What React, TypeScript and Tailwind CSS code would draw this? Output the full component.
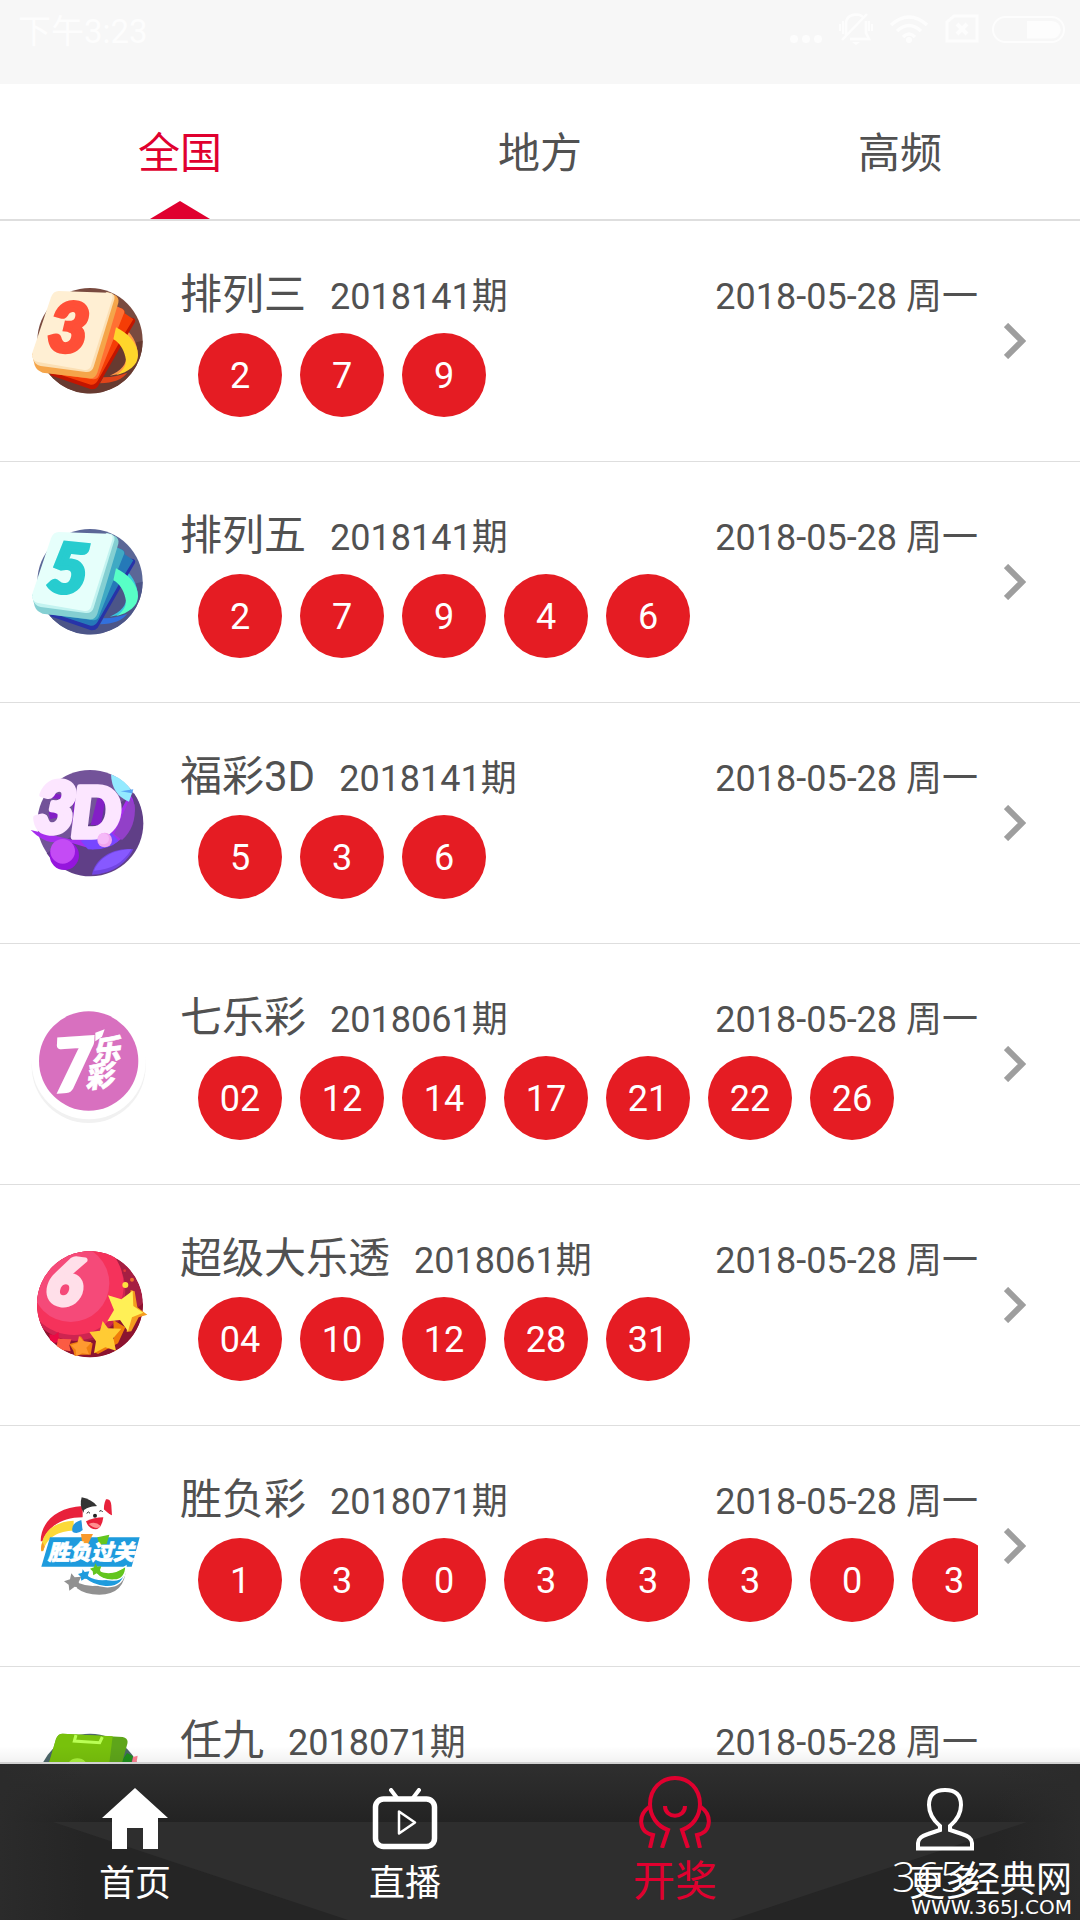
import type {ReactNode} from 'react';

interface Draw {
  name: string;
  period: string;
  date: string;
  balls: string[];
  icon: ReactNode;
}

interface TileColors {
  disc: string;
  discDark: string;
  face: string;
  faceEdge: string;
  side: string;
  cardA: string;
  cardB: string;
  cardC: string;
  ribbon: string;
  ribbonBack: string;
  ribbonLow: string;
  digit: string;
}

const orangeTile: TileColors = {
  disc: '#794a3f',
  discDark: '#673a30',
  face: '#ffefd3',
  faceEdge: '#fbdfb4',
  side: '#f5a54a',
  cardA: '#ff7033',
  cardB: '#f53d06',
  cardC: '#c21500',
  ribbon: '#ffd62b',
  ribbonBack: '#ff9648',
  ribbonLow: '#e0441a',
  digit: '#ff4f37'
};

const tealTile: TileColors = {
  disc: '#5b6797',
  discDark: '#4c5588',
  face: '#e6fffb',
  faceEdge: '#c3f3f0',
  side: '#84cfd2',
  cardA: '#3fa9c4',
  cardB: '#2579b8',
  cardC: '#2733a8',
  ribbon: '#58ffc6',
  ribbonBack: '#38c6dd',
  ribbonLow: '#3270dd',
  digit: '#27cccf'
};

function TileIcon({digit, colors}: Readonly<{digit: string; colors: TileColors}>) {
  return (
    <svg className="size-[120px] overflow-visible" viewBox="60 33 360 360" aria-hidden="true">
      <circle cx="240" cy="212" r="158" fill={colors.disc} />
      <path d="M398 212a158 158 0 0 1-300 70z" fill={colors.discDark} />
      <path d="M270 340q60-2 82-32-30 12-72 14z" fill={colors.ribbonLow} />
      <path d="M335 165c28 22 50 55 48 92-4 32-40 55-84 60 34-14 52-34 50-62-2-26-16-46-36-60z" fill={colors.ribbonBack} />
      {/* Stacked cards behind the front tile */}
      <path d="M340 140l30 4q8 3 5 12l-20 34-92 160q-8 10-22 7l-122-42z" fill={colors.cardC} />
      <path d="M322 112l16 4q8 6 6 14l26 18-32 52-76 134q-8 12-20 10l-116-38z" fill={colors.cardB} />
      <path d="M318 108l18 8q9 5 6 14l-76 188q-6 12-20 9l-132-18z" fill={colors.cardA} />
      <path d="M318 172c36 18 66 48 66 84 0 30-28 50-66 60 24-16 34-34 28-56-6-24-18-42-36-52z" fill={colors.ribbon} />
      <path d="M290 68l26 8q12 8 9 22l-63 210q-7 20-26 17L98 308q-18-6-24-22l-8-34z" fill={colors.side} />
      <path d="M290 66l16 4q10 6 7 18l-62 202q-6 18-24 16L92 288q-20-4-24-26z" fill={colors.faceEdge} />
      <path d="M146 63l148 5q17 2 13 18l-64 202q-5 14-20 12L84 276q-22-6-17-28l56-166q7-19 23-19z" fill={colors.face} />
      <text
        x="176"
        y="245"
        transform="rotate(6 176 175)"
        textAnchor="middle"
        fontSize="204"
        fill={colors.digit}
        stroke={colors.digit}
        strokeWidth="14"
        className="font-[Lato,sans-serif] font-black italic"
      >
        {digit}
      </text>
    </svg>
  );
}

function ThreeDIcon() {
  return (
    <svg className="size-[120px] overflow-visible" viewBox="60 69 360 360" aria-hidden="true">
      <circle cx="240" cy="248" r="158" fill="#735399" />
      <path d="M372 160a158 158 0 0 1-262 180z" fill="#603f87" />
      <path d="M246 404c8-44 56-82 124-76-24 48-72 76-124 76z" fill="#7145e2" />
      <path d="M252 392c14-36 56-64 112-64-22 40-62 62-112 64z" fill="#8759ff" />
      {/* Depth of the letters */}
      <path d="M62 270q30 30 60 36l66 4 60 18q110-4 126-120-4-42-16-44l-60 110-110 26z" fill="#a62ded" />
      <path d="M212 302l22 26q60 4 92-26l-22-24z" fill="#7746ff" />
      <path d="M312 282l24 18q44-40 38-106l-14-20z" fill="#9240c8" />
      <path d="M190 180h40l-24 80-20 6z" fill="#831fc6" />
      <path d="M262 175h44l-20 80h-44z" fill="#831fc6" />
      <path d="M286 180l18 10-14 50-16 6z" fill="#5f3d8e" />
      <path d="M124 160l40 6-10 12-34-4zM116 216l34-2-4 18-26 6z" fill="#831fc6" />
      <g fill="#fce6ff" stroke="#fce6ff" strokeWidth="17" strokeLinejoin="round" className="font-[Lato,sans-serif] font-black italic">
        <text x="74" y="278" fontSize="212" transform="rotate(5 140 200)">3</text>
        <text x="184" y="291" fontSize="208">D</text>
      </g>
      <path d="M303 103q45 18 64 54l-10 28q-52-20-54-82z" fill="#93eaff" />
      <path d="M332 154l38-6-4 12z" fill="#58a5f4" />
      <circle cx="284" cy="300" r="22" fill="#f0a4ee" />
      <circle cx="280" cy="296" r="17" fill="#f5b9f8" />
      <circle cx="163" cy="346" r="44" fill="#9515dd" />
      <circle cx="158" cy="334" r="37" fill="#c44bf5" />
    </svg>
  );
}

function SevenIcon() {
  return (
    <svg className="size-[120px] overflow-visible" viewBox="60 42 360 360" aria-hidden="true">
      <circle cx="236" cy="228" r="171" fill="#f1f1f1" />
      <circle cx="236" cy="217" r="171" fill="#ffffff" />
      <circle cx="236" cy="213" r="149" fill="#d870bf" />
      <path d="M256 128l28-10-8 22-20 14z" fill="#ffffff" />
      <g fill="#ffffff" stroke="#ffffff">
        <text x="128" y="302" fontSize="218" strokeWidth="10" transform="rotate(-4 200 220)" className="font-[Lato,sans-serif] font-black italic">7</text>
        <g fontSize="86" strokeWidth="2" className="font-['Noto_Sans_CJK_SC',sans-serif] font-black italic">
          <text x="244" y="212" transform="rotate(-6 290 180)">乐</text>
          <text x="224" y="290" transform="rotate(-6 270 260)">彩</text>
        </g>
      </g>
    </svg>
  );
}

function LottoIcon() {
  return (
    <svg className="size-[120px] overflow-visible" viewBox="60 45 360 360" aria-hidden="true">
      <clipPath id="lotto-disc">
        <circle cx="240" cy="223" r="159" />
      </clipPath>
      <g clipPath="url(#lotto-disc)">
        <circle cx="240" cy="223" r="159" fill="#a61e42" />
        <path d="M80 260q60 90 170 70l150-110v180H80z" fill="#8c132f" />
        <circle cx="196" cy="182" r="150" fill="#ce2450" />
        <circle cx="192" cy="166" r="149" fill="#f5325b" />
        <circle cx="182" cy="160" r="116" fill="#f54a79" />
      </g>
      <text
        x="164"
        y="224"
        textAnchor="middle"
        fontSize="194"
        fill="#ffdfe9"
        stroke="#ffdfe9"
        strokeWidth="16"
        strokeLinejoin="round"
        transform="rotate(8 168 160)"
        className="font-[Lato,sans-serif] font-black italic"
      >
        6
      </text>
      <path d="M118 312l14 4 14-10v16l12 10-20 6-6 0-12-8z" fill="#ea0a44" />
      <path d="M144 326l40 2-6 18 4 18-24-4-18-12z" fill="#fb5b43" />
      <path d="M212 318l12 18 24 4-6 34-30 0-18 4-4-16-12-20 24-6z" fill="#f08010" />
      <path d="M207 317l12 16 26 4-16 16 8 20-20-3-18 8-2-19-14-13 20-7z" fill="#ff9a30" />
      <path d="M310 270l36 22-22 48-60 32-12-6 60-40z" fill="#ef7d0a" />
      <path d="M278 273l16 22 40 1-24 28 8 38-32-10-34 18 6-36-20-28 32-4z" fill="#ffcb34" />
      <path d="M362 180l12 4 8 48 30 22-26 8-22 42-14 2z" fill="#f59c1f" />
      <path d="M368 182l2 46 30 20-34 14-12 42-24-34-38 4 20-34-18-44 40 12z" fill="#fff056" />
      <circle cx="346" cy="165" r="9" fill="#ffe040" />
      <circle cx="366" cy="149" r="6" fill="#ee7030" />
      <circle cx="344" cy="122" r="4" fill="#e03838" />
    </svg>
  );
}

function MatchIcon() {
  return (
    <svg className="size-[120px] overflow-visible" viewBox="60 48 360 360" aria-hidden="true">
      <path d="M92 214C92 158 138 112 218 108v34c-60 0-104 26-120 72z" fill="#e8213b" />
      <path d="M93 242c0-56 40-88 98-90v30c-44 0-82 20-90 60z" fill="#fbd938" />
      <path d="M94 244c-2-10 0-20 4-28l6 14-6 14z" fill="#f39a2c" />
      {/* Mascot */}
      <path d="M188 186q-8-26 26-36l4 30q-14 14-30 6z" fill="#2496dd" />
      <path d="M215 82q30 6 46 26l-40 20q-14-20-6-46z" fill="#343434" />
      <path d="M288 88q14-4 16 18l2 30-24-10q-2-22 6-38z" fill="#e8213b" />
      <path d="M222 120q34-22 62 0l18 16q-4 22-10 36l4 26-40-4-34 4-6-40z" fill="#ffffff" />
      <path d="M228 154q24-12 52-12-4 32-22 36-22 0-30-24z" fill="#e8213b" />
      <path d="M236 162q20-10 36 6-12 14-36-6z" fill="#ff9090" />
      <circle cx="255" cy="137" r="6" fill="#222222" />
      <path d="M230 130q6-8 10 0M268 124q6-6 10 2" fill="none" stroke="#222222" strokeWidth="3" />
      <path d="M120 202h269l-24 88H94z" fill="#1e9bdd" />
      <path d="M213 192h36l-16 32h-16z" fill="#f99a2b" />
      <path d="M262 202l36-8-8 28-22 2z" fill="#63c51f" />
      <text
        x="243"
        y="270"
        textAnchor="middle"
        fontSize="65"
        fill="#ffffff"
        stroke="#ffffff"
        strokeWidth="2"
        className="font-['Noto_Sans_CJK_SC',sans-serif] font-black italic"
      >
        胜负过关
      </text>
      {/* Shooting stars */}
      <path d="M208 340q72 30 140-48-2 82-80 82-44 0-68-20z" fill="#919191" />
      <path d="M234 316q56 34 114-22-6 60-62 56-38-4-58-22z" fill="#1e9bdd" stroke="#ffffff" strokeWidth="4" />
      <path d="M264 300q40 20 84-12-2 42-36 42-34 2-54-20z" fill="#63c51f" stroke="#ffffff" strokeWidth="4" />
      <path d="M256 280l6 10 12-2-4 12 4 12-14-2-10 6-2-12-8-8 12-4z" fill="#63c51f" />
      <path d="M218 298l6 8 14-2-4 12 4 12-14-2-10 6-2-12-8-8 12-4z" fill="#1e9bdd" />
      <path d="M184 310l10 12 20-2-8 16 6 18-18-4-16 12-2-18-14-10 18-6z" fill="#919191" />
    </svg>
  );
}

function AnyNineIcon() {
  return (
    <svg className="size-[120px]" viewBox="0 0 360 360" aria-hidden="true">
      <circle cx="180" cy="178" r="158" fill="#4c6669" />
      <path d="M291 78l18 10-12 40h-40z" fill="#1f8f1c" />
      <path d="M309 90l14-4-4 24h-14z" fill="#ff8090" />
      <path d="M98 20l180 10q18 4 14 20L240 240 30 200 78 36q6-16 20-16z" fill="#5ea51a" />
      <path d="M98 20l150 8-24 190L30 200 78 36q6-16 20-16z" fill="#78c10c" />
      <path d="M138 24l-5 18 76 5 8-17" fill="none" stroke="#baff55" strokeWidth="9" />
      <circle cx="142" cy="128" r="34" fill="#a8f03c" />
    </svg>
  );
}

const draws: Draw[] = [
  {name: '排列三', period: '2018141期', date: '2018-05-28 周一', balls: ['2', '7', '9'], icon: <TileIcon digit="3" colors={orangeTile} />},
  {name: '排列五', period: '2018141期', date: '2018-05-28 周一', balls: ['2', '7', '9', '4', '6'], icon: <TileIcon digit="5" colors={tealTile} />},
  {name: '福彩3D', period: '2018141期', date: '2018-05-28 周一', balls: ['5', '3', '6'], icon: <ThreeDIcon />},
  {name: '七乐彩', period: '2018061期', date: '2018-05-28 周一', balls: ['02', '12', '14', '17', '21', '22', '26'], icon: <SevenIcon />},
  {name: '超级大乐透', period: '2018061期', date: '2018-05-28 周一', balls: ['04', '10', '12', '28', '31'], icon: <LottoIcon />},
  {name: '胜负彩', period: '2018071期', date: '2018-05-28 周一', balls: ['1', '3', '0', '3', '3', '3', '0', '3'], icon: <MatchIcon />},
  {name: '任九', period: '2018071期', date: '2018-05-28 周一', balls: [], icon: <AnyNineIcon />}
];

const tabs = ['全国', '地方', '高频'];

function StatusBar() {
  return (
    <div className="flex h-[84px] shrink-0 items-start justify-between bg-[#f7f7f7] pt-3 pr-[15px] pl-[18px] text-[#fdfdfd]">
      <span className="text-[33px] leading-[40px]">下午3:23</span>
      <div className="flex gap-3">
        <svg className="h-8 w-9" viewBox="0 0 36 32" fill="currentColor" aria-hidden="true">
          <circle cx="6" cy="27" r="4" />
          <circle cx="18" cy="27" r="4" />
          <circle cx="30" cy="27" r="4" />
        </svg>
        <svg className="h-8 w-10 overflow-visible" viewBox="0 0 40 32" fill="none" stroke="currentColor" strokeWidth="2.5" aria-hidden="true">
          <path d="M10 24V12Q10 3 20 2.500Q25 2.500 28 6M30 9v12l3 6H14M6 28L31 2" />
          <path d="M7 9v13M4 12v7M33 9v10M36 12v7" strokeWidth="2" />
          <path d="M16 30h8l-4 3z" fill="currentColor" stroke="none" />
        </svg>
        <svg className="h-8 w-10" viewBox="0 0 40 32" fill="none" stroke="currentColor" strokeWidth="3.5" aria-hidden="true">
          <path d="M3 13q18-16 36 0M9 19q12-11 24 0M15 25q6-6 12 0" />
          <circle cx="21" cy="28" r="3" fill="currentColor" stroke="none" />
        </svg>
        <svg className="h-8 w-10" viewBox="0 0 40 32" fill="none" stroke="currentColor" strokeWidth="3" aria-hidden="true">
          <path d="M7 29V10l7-6h23v25z" />
          <path d="M17 12l10 10M27 12L17 22" strokeWidth="4" />
        </svg>
        <svg className="h-8 w-[73px]" viewBox="0 0 73 32" fill="none" aria-hidden="true">
          <rect x="1" y="5" width="71" height="25" rx="12.5" stroke="currentColor" strokeWidth="2" />
          <path d="M35 9h25a8.500 8.500 0 0 1 0 17.500H35z" fill="currentColor" />
        </svg>
      </div>
    </div>
  );
}

function DrawRow({draw}: Readonly<{draw: Draw}>) {
  return (
    <li className="h-[241px] border-b border-[#dedede]">
      <a href="#detail" className="flex h-full items-center pr-[54px] pl-[30px]">
        <div className="mr-[30px] shrink-0">{draw.icon}</div>
        <div className="min-w-0 flex-1 self-start pt-12">
          <div className="mb-2.5 flex items-baseline leading-[52px]">
            <h2 className="mr-6 text-[42px]">{draw.name}</h2>
            <span className="text-[36px]">{draw.period}</span>
            <time className="ml-auto text-[36px]">{draw.date}</time>
          </div>
          <div className="flex gap-[18px] overflow-hidden pl-[18px]">
            {draw.balls.map((ball, i) => (
              <span
                key={i}
                className="flex size-[84px] shrink-0 items-center justify-center rounded-full bg-[#e51c23] pt-0.5 text-[36px] leading-none text-white"
              >
                {ball}
              </span>
            ))}
          </div>
        </div>
        <svg className="ml-[26px] h-9 w-[22px] shrink-0" viewBox="0 0 22 36" fill="none" stroke="#9e9e9e" strokeWidth="6" aria-hidden="true">
          <path d="M2 2l16 16L2 34" />
        </svg>
      </a>
    </li>
  );
}

function BottomNav() {
  const itemClass = 'relative flex flex-1 flex-col items-center justify-end gap-2 pb-3';

  return (
    <nav className="relative flex h-[158px] shrink-0 border-t-2 border-[#d2d2d2] bg-[#252525] text-white">
      <svg className="absolute inset-0 size-full" viewBox="0 0 1080 156" preserveAspectRatio="none" aria-hidden="true">
        <defs>
          <linearGradient id="nav-top" x1="0" y1="0" x2="0" y2="1">
            <stop offset="0" stopColor="#2f2f2f" />
            <stop offset="1" stopColor="#232323" />
          </linearGradient>
          <linearGradient id="nav-side" x1="0" y1="0" x2="1" y2="0">
            <stop offset="0" stopColor="#2b2b2b" />
            <stop offset="0.08" stopColor="#2b2b2b" stopOpacity="0" />
            <stop offset="0.92" stopColor="#2b2b2b" stopOpacity="0" />
            <stop offset="1" stopColor="#2b2b2b" />
          </linearGradient>
        </defs>
        <rect width="1080" height="58" fill="url(#nav-top)" />
        <rect width="1080" height="156" fill="url(#nav-side)" />
        <path d="M53 58H1027L731 156H348z" fill="#2e2e2e" />
      </svg>
      <a href="#home" className={itemClass}>
        <svg className="h-16 w-[66px]" viewBox="0 0 66 64" fill="currentColor" aria-hidden="true">
          <path d="M33 0L66 30H56V61H41V40H25V61H10V30H0z" />
        </svg>
        <span className="text-[36px] leading-[48px]">首页</span>
      </a>
      <a href="#live" className={itemClass}>
        <svg className="h-16 w-[66px]" viewBox="0 0 66 64" fill="none" stroke="currentColor" aria-hidden="true">
          <rect x="3.5" y="11" width="59" height="47.5" rx="8" strokeWidth="5.5" />
          <path d="M19 2l6 8M47 2l-6 8" strokeWidth="4" strokeLinecap="round" />
          <path d="M27 23.500v22l16-11z" strokeWidth="2.5" strokeLinejoin="round" />
        </svg>
        <span className="text-[36px] leading-[48px]">直播</span>
      </a>
      <a href="#draws" aria-current="page" className={`${itemClass} text-[#e0002f]`}>
        <svg className="h-[74px] w-[72px]" viewBox="0 0 72 74" fill="none" stroke="currentColor" strokeWidth="4" aria-hidden="true">
          <path d="M23 74l6-18C18 52 11 42 11 30C11 15 22 4 36 4S61 15 61 30C61 42 54 52 43 56l6 18" />
          <path d="M10 33C-1 41-1 58 14 61l-3 13M62 33c11 8 11 25-4 28l3 13" />
          <path d="M26 32c0 13 20 13 20 0" />
        </svg>
        <span className="text-[42px] leading-[52px]">开奖</span>
      </a>
      <a href="#more" className={itemClass}>
        <svg className="h-16 w-[58px]" viewBox="0 0 58 64" fill="none" stroke="currentColor" strokeWidth="4" aria-hidden="true">
          <path d="M24 38C17 32 13 26 13 17C13 6 19 2 29 2s16 4 16 15c0 9-4 15-11 21v4l12 4q10 3 10 9v5.500H2V55q0-6 10-9l12-4z" />
        </svg>
        <span className="text-[36px] leading-[48px]">更多</span>
      </a>
      {/* Site stamp laid over the last item */}
      <div className="absolute right-2 bottom-1 flex flex-col items-end whitespace-nowrap">
        <div className="flex items-baseline leading-[36px]">
          <span className="font-['Open_Sans',sans-serif] text-[42px] font-light">365</span>
          <span className="text-[36px]">经典网</span>
        </div>
        <span className="font-['DejaVu_Sans',sans-serif] text-[20px] leading-[18px]">WWW.365J.COM</span>
      </div>
    </nav>
  );
}

export default function App() {
  return (
    <div className="flex h-screen flex-col overflow-hidden bg-white font-['Roboto','Noto_Sans_CJK_SC',sans-serif] text-[#515151]">
      <StatusBar />

      <div role="tablist" className="flex shrink-0 border-b-2 border-[#dedede] text-[42px] leading-[60px]">
        {tabs.map((tab, i) => (
          <button
            key={tab}
            type="button"
            role="tab"
            aria-selected={i === 0}
            className={`flex h-[135px] flex-1 flex-col items-center justify-between pt-10 ${i === 0 ? 'text-[#e0002f]' : ''}`}
          >
            {tab}
            {i === 0 && (
              <svg className="h-[18px] w-[60px]" viewBox="0 0 60 18" fill="currentColor" aria-hidden="true">
                <path d="M30 0l30 18H0z" />
              </svg>
            )}
          </button>
        ))}
      </div>

      <main className="relative min-h-0 flex-1 overflow-hidden">
        <ul>
          {draws.map(draw => (
            <DrawRow key={draw.name} draw={draw} />
          ))}
        </ul>
        <div className="absolute inset-x-0 bottom-0 h-4 bg-linear-to-t from-black/5 to-transparent" />
      </main>

      <BottomNav />
    </div>
  );
}
